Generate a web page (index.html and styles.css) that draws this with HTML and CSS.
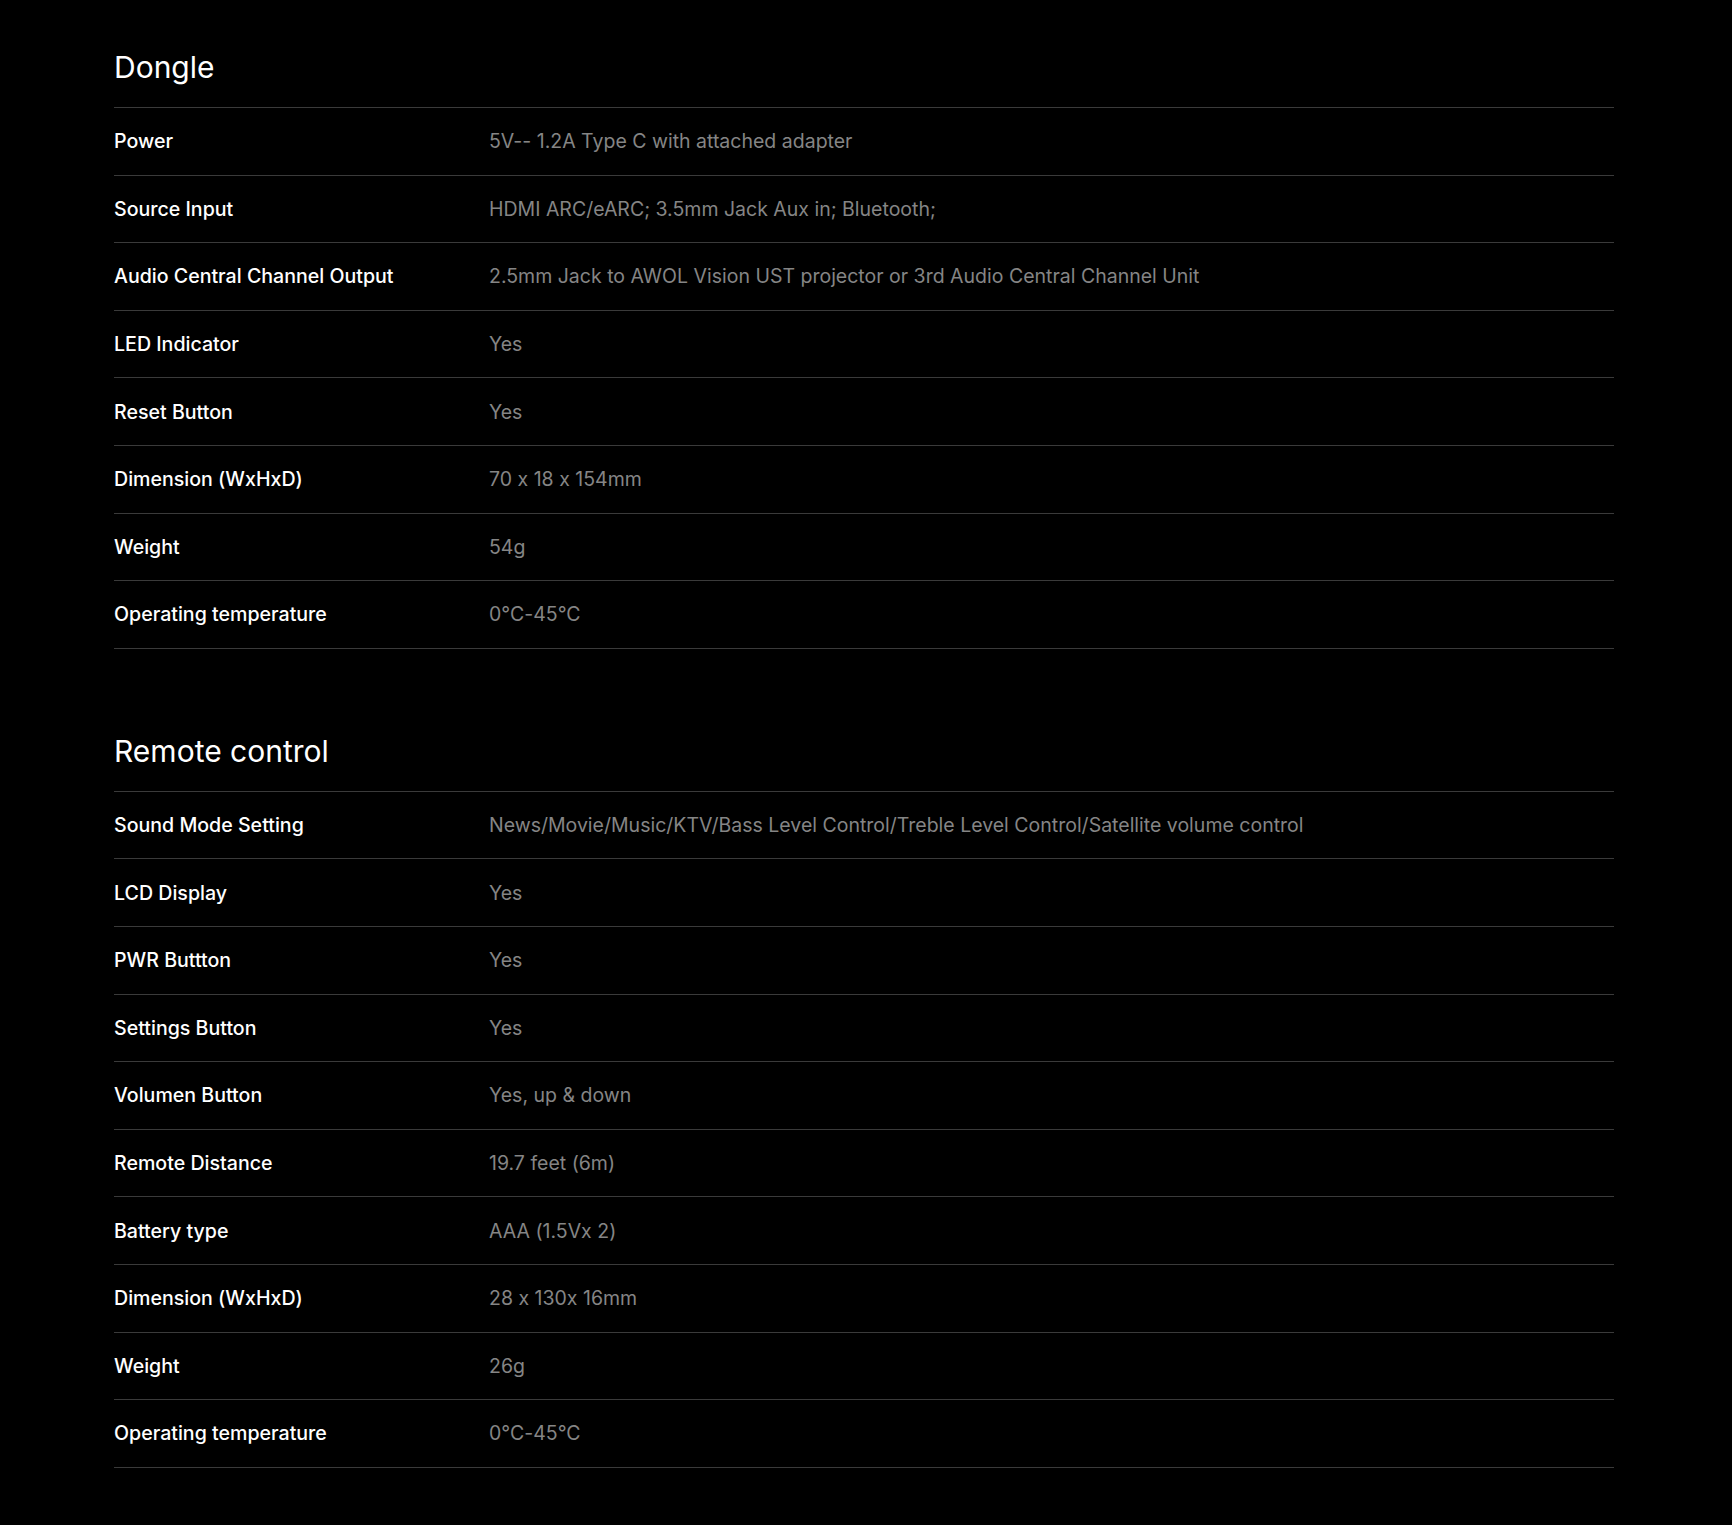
FILE: index.html
```html
<!DOCTYPE html>
<html lang="en">
<head>
<meta charset="utf-8">
<title>Specifications</title>
<link rel="stylesheet" href="styles.css">
</head>
<body>
<main class="specs">
  <section class="spec-group">
    <h2 class="spec-title">Dongle</h2>
    <dl class="spec-list">
      <div class="spec-row"><dt>Power</dt><dd>5V-- 1.2A Type C with attached adapter</dd></div>
      <div class="spec-row"><dt>Source Input</dt><dd>HDMI ARC/eARC; 3.5mm Jack Aux in; Bluetooth;</dd></div>
      <div class="spec-row"><dt>Audio Central Channel Output</dt><dd>2.5mm Jack to AWOL Vision UST projector or 3rd Audio Central Channel Unit</dd></div>
      <div class="spec-row"><dt>LED Indicator</dt><dd>Yes</dd></div>
      <div class="spec-row"><dt>Reset Button</dt><dd>Yes</dd></div>
      <div class="spec-row"><dt>Dimension (WxHxD)</dt><dd>70 x 18 x 154mm</dd></div>
      <div class="spec-row"><dt>Weight</dt><dd>54g</dd></div>
      <div class="spec-row"><dt>Operating temperature</dt><dd>0°C-45°C</dd></div>
    </dl>
  </section>
  <section class="spec-group">
    <h2 class="spec-title">Remote control</h2>
    <dl class="spec-list">
      <div class="spec-row"><dt>Sound Mode Setting</dt><dd>News/Movie/Music/KTV/Bass Level Control/Treble Level Control/Satellite volume control</dd></div>
      <div class="spec-row"><dt>LCD Display</dt><dd>Yes</dd></div>
      <div class="spec-row"><dt>PWR Buttton</dt><dd>Yes</dd></div>
      <div class="spec-row"><dt>Settings Button</dt><dd>Yes</dd></div>
      <div class="spec-row"><dt>Volumen Button</dt><dd>Yes, up &amp; down</dd></div>
      <div class="spec-row"><dt>Remote Distance</dt><dd>19.7 feet (6m)</dd></div>
      <div class="spec-row"><dt>Battery type</dt><dd>AAA (1.5Vx 2)</dd></div>
      <div class="spec-row"><dt>Dimension (WxHxD)</dt><dd>28 x 130x 16mm</dd></div>
      <div class="spec-row"><dt>Weight</dt><dd>26g</dd></div>
      <div class="spec-row"><dt>Operating temperature</dt><dd>0°C-45°C</dd></div>
    </dl>
  </section>
</main>
</body>
</html>
```

FILE: styles.css
```css
html, body {
  margin: 0;
  padding: 0;
  background: #000;
}

body {
  font-family: Inter, "Liberation Sans", sans-serif;
  font-feature-settings: "calt" 0;
  color: #fff;
}

.specs {
  width: 1500px;
  padding: 49px 0 57px 114px;
}

.spec-group + .spec-group {
  margin-top: 84px;
}

.spec-title {
  margin: 0 0 22px;
  font-size: 30px;
  line-height: 36px;
  font-weight: 400;
  color: #fff;
}

.spec-list {
  margin: 0;
  border-bottom: 1px solid #3a3a3a;
}

.spec-row {
  display: grid;
  grid-template-columns: 375px 1fr;
  align-items: center;
  padding: 19.3px 0;
  border-top: 1px solid #3a3a3a;
}

.spec-row dt {
  font-size: 19.6px;
  line-height: 28px;
  font-weight: 450;
  color: #fff;
}

.spec-row dd {
  margin: 0;
  font-size: 19.5px;
  line-height: 28px;
  font-weight: 400;
  color: #858585;
}
```
